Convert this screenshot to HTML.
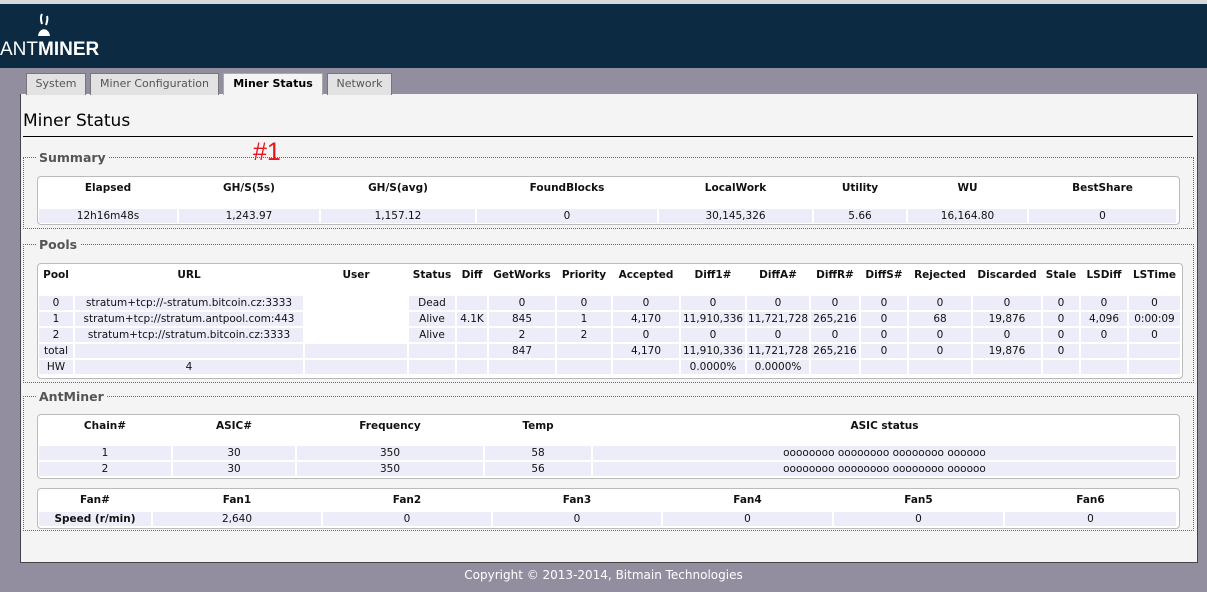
<!DOCTYPE html>
<html><head><meta charset="utf-8"><style>
*{margin:0;padding:0;box-sizing:border-box}
body{width:1207px;height:592px;background:#928ea0;font-family:"DejaVu Sans","Liberation Sans",sans-serif;font-size:10.5px;color:#111;position:relative;overflow:hidden}
.top{position:absolute;left:0;top:0;width:1207px;height:4px;background:#d8d8d8}
.hdr{position:absolute;left:0;top:4px;width:1207px;height:64px;background:#0c2a41}
.logo{position:absolute;left:0;top:39px;color:#fff;font-family:"Liberation Sans",sans-serif;font-size:19px;letter-spacing:0px}
.tab{position:absolute;top:73px;height:22px;background:#e2e2e2;border:1px solid #777;border-bottom:none;color:#555;font-size:11px;line-height:20px;text-align:center}
.tab.on{background:#f4f4f4;color:#000;font-weight:bold;border-color:#aaa}
.panel{position:absolute;left:20px;top:94px;width:1178px;height:469px;background:#f4f4f4;border:1px solid #444;border-top:none}
h1{position:absolute;left:23px;top:111px;font-size:17px;font-weight:normal;font-family:"DejaVu Sans",sans-serif;color:#000}
.hr{position:absolute;left:23px;top:136px;width:1170px;height:1px;background:#000}
.fs{position:absolute;left:23px;width:1171px;border:1px dotted #666}
.lg{position:absolute;left:36px;background:#f4f4f4;padding:0 3px;font-weight:bold;font-size:12.5px;color:#555}
.box{position:absolute;left:37px;background:#fff;border:1px solid #bbb;border-radius:4px}
table{position:absolute;left:37px;border-spacing:2px;table-layout:fixed;border-collapse:separate}
td{padding:0;text-align:center;white-space:nowrap;overflow:hidden;height:14px;line-height:14px;background:#ededfa}
tr.h td{background:transparent;font-weight:bold;vertical-align:top;line-height:14px;padding-top:3px}
td.w{background:#fff}
.foot{position:absolute;top:568px;left:0;width:1207px;text-align:center;color:#fff;font-size:12px;font-family:"DejaVu Sans",sans-serif}
</style></head><body>
<div class="top"></div>
<div class="hdr"></div>
<svg style="position:absolute;left:36px;top:12px" width="16" height="26" viewBox="0 0 16 26"><path d="M6 2 C4 5 5 9 6 12 M11 4 C12 7 11 10 10 13" stroke="#fff" stroke-width="2" fill="none"/><path d="M2 24 C3 15 13 15 14 24 Z" fill="#fff"/></svg>
<div class="logo">ANT<b>MINER</b></div>
<div class="panel"></div>
<div class="tab" style="left:26px;width:60px">System</div>
<div class="tab" style="left:90px;width:129px">Miner Configuration</div>
<div class="tab on" style="left:223px;width:100px">Miner Status</div>
<div class="tab" style="left:327px;width:65px">Network</div>
<h1>Miner Status</h1>
<div class="hr"></div>
<div style="position:absolute;left:253px;top:138px;color:#e8141c;font-size:25px;font-family:'Liberation Sans',sans-serif">#1</div>

<div class="fs" style="top:157px;height:72px"></div>
<div class="lg" style="top:150px">Summary</div>
<div class="box" style="top:176px;width:1143px;height:49px"></div>
<table style="top:176px"><tr class="h" style="height:29px"><td style="width:138px">Elapsed</td><td style="width:140px">GH/S(5s)</td><td style="width:154px">GH/S(avg)</td><td style="width:180px">FoundBlocks</td><td style="width:153px">LocalWork</td><td style="width:92px">Utility</td><td style="width:119px">WU</td><td style="width:147px">BestShare</td></tr>
<tr><td>12h16m48s</td><td>1,243.97</td><td>1,157.12</td><td>0</td><td>30,145,326</td><td>5.66</td><td>16,164.80</td><td>0</td></tr></table>

<div class="fs" style="top:244px;height:139px"></div>
<div class="lg" style="top:237px">Pools</div>
<div class="box" style="top:263px;width:1146px;height:116px"></div>
<table style="top:263px"><tr class="h" style="height:29px"><td style="width:34px">Pool</td><td style="width:228px">URL</td><td style="width:102px">User</td><td style="width:46px">Status</td><td style="width:30px">Diff</td><td style="width:66px">GetWorks</td><td style="width:54px">Priority</td><td style="width:66px">Accepted</td><td style="width:64px">Diff1#</td><td style="width:62px">DiffA#</td><td style="width:48px">DiffR#</td><td style="width:46px">DiffS#</td><td style="width:62px">Rejected</td><td style="width:68px">Discarded</td><td style="width:36px">Stale</td><td style="width:46px">LSDiff</td><td style="width:51px">LSTime</td></tr>
<tr><td>0</td><td>stratum+tcp://-stratum.bitcoin.cz:3333</td><td class="w"></td><td>Dead</td><td></td><td>0</td><td>0</td><td>0</td><td>0</td><td>0</td><td>0</td><td>0</td><td>0</td><td>0</td><td>0</td><td>0</td><td>0</td></tr>
<tr><td>1</td><td>stratum+tcp://stratum.antpool.com:443</td><td class="w"></td><td>Alive</td><td>4.1K</td><td>845</td><td>1</td><td>4,170</td><td>11,910,336</td><td>11,721,728</td><td>265,216</td><td>0</td><td>68</td><td>19,876</td><td>0</td><td>4,096</td><td>0:00:09</td></tr>
<tr><td>2</td><td>stratum+tcp://stratum.bitcoin.cz:3333</td><td class="w"></td><td>Alive</td><td></td><td>2</td><td>2</td><td>0</td><td>0</td><td>0</td><td>0</td><td>0</td><td>0</td><td>0</td><td>0</td><td>0</td><td>0</td></tr>
<tr><td>total</td><td></td><td></td><td></td><td></td><td>847</td><td></td><td>4,170</td><td>11,910,336</td><td>11,721,728</td><td>265,216</td><td>0</td><td>0</td><td>19,876</td><td>0</td><td></td><td></td></tr>
<tr><td>HW</td><td>4</td><td></td><td></td><td></td><td></td><td></td><td></td><td>0.0000%</td><td>0.0000%</td><td></td><td></td><td></td><td></td><td></td><td></td><td></td></tr></table>

<div class="fs" style="top:396px;height:135px"></div>
<div class="lg" style="top:389px">AntMiner</div>
<div class="box" style="top:414px;width:1143px;height:65px"></div>
<table style="top:414px"><tr class="h" style="height:28px"><td style="width:132px">Chain#</td><td style="width:122px">ASIC#</td><td style="width:186px">Frequency</td><td style="width:106px">Temp</td><td style="width:583px">ASIC status</td></tr>
<tr><td>1</td><td>30</td><td>350</td><td>58</td><td>oooooooo oooooooo oooooooo oooooo</td></tr>
<tr><td>2</td><td>30</td><td>350</td><td>56</td><td>oooooooo oooooooo oooooooo oooooo</td></tr></table>
<div class="box" style="top:488px;width:1143px;height:41px"></div>
<table style="top:488px"><tr class="h" style="height:20px"><td style="width:112px">Fan#</td><td style="width:168px">Fan1</td><td style="width:168px">Fan2</td><td style="width:168px">Fan3</td><td style="width:169px">Fan4</td><td style="width:169px">Fan5</td><td style="width:171px">Fan6</td></tr>
<tr><td style="font-weight:bold">Speed (r/min)</td><td>2,640</td><td>0</td><td>0</td><td>0</td><td>0</td><td>0</td></tr></table>

<div class="foot">Copyright © 2013-2014, Bitmain Technologies</div>
</body></html>
